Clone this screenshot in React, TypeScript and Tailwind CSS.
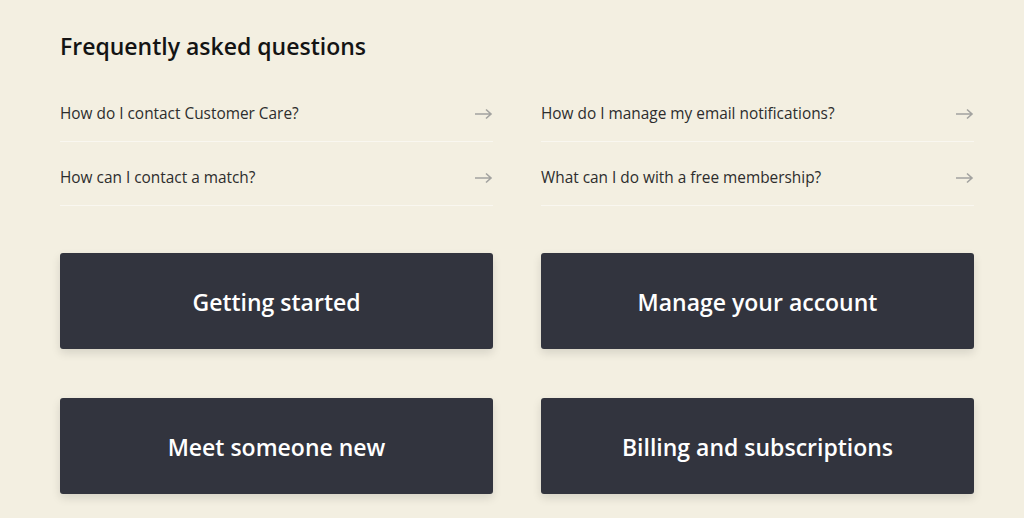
const faqs = [
  ['How do I contact Customer Care?', 'How do I manage my email notifications?'],
  ['How can I contact a match?', 'What can I do with a free membership?'],
];

const topics = ['Getting started', 'Manage your account', 'Meet someone new', 'Billing and subscriptions'];

function Arrow() {
  return (
    <svg width="19" height="12" viewBox="0 0 19 12" fill="none" className="shrink-0 text-[#a3a3a0]">
      <path d="M1 6h16M12 1.5L17 6l-5 4.5" stroke="currentColor" strokeWidth="1.6" />
    </svg>
  );
}

export default function App() {
  const left = faqs.map((r) => r[0]);
  const right = faqs.map((r) => r[1]);

  return (
    <div
      className="min-h-[518px] w-full bg-[#f3efe1] px-[60px] pt-[30px] pb-6 text-[#1e1e1e]"
      style={{ fontFamily: '"Open Sans", sans-serif' }}
    >
      <h2 className="text-[23px] leading-8 font-semibold text-[#141414]">Frequently asked questions</h2>

      <div className="mt-4 grid w-[914px] grid-cols-2 gap-x-[48px]">
        {[left, right].map((col, i) => (
          <div key={i}>
            {col.map((q) => (
              <a
                key={q}
                href="#"
                className="flex items-center justify-between border-b border-[#f9f7f0] pt-[25px] pb-[16px] text-[15.4px] leading-[22px] text-[#2d2d2d]"
              >
                <span>{q}</span>
                <Arrow />
              </a>
            ))}
          </div>
        ))}
      </div>

      <div className="mt-[47px] grid w-[914px] grid-cols-2 gap-x-[48px] gap-y-[49px]">
        {topics.map((t) => (
          <a
            key={t}
            href="#"
            className="flex h-[96px] items-center justify-center rounded-[3px] bg-[#32343e] pt-[2px] text-[23px] font-semibold text-white shadow-[0_4px_10px_rgba(0,0,0,0.12)]"
          >
            {t}
          </a>
        ))}
      </div>
    </div>
  );
}
